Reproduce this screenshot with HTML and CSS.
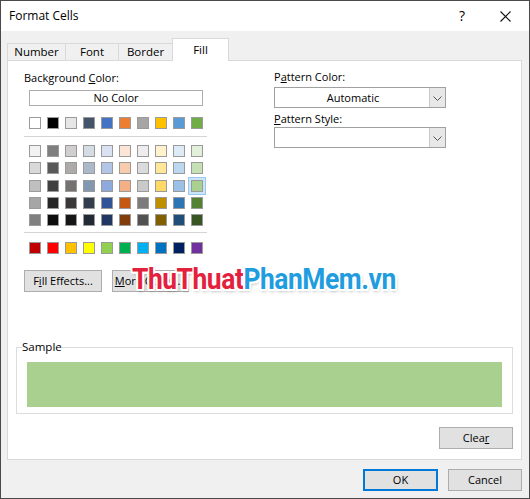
FILE: index.html
```html
<!DOCTYPE html>
<html>
<head>
<meta charset="utf-8">
<title>Format Cells</title>
<link rel="stylesheet" href="styles.css">
</head>
<body>
<div class="window">
  <div class="titlebar">
    <span class="title">Format Cells</span>
    <span class="help">?</span>
    <svg class="close" width="11" height="11" viewBox="0 0 11 11"><path d="M0.5 0.5 L10.5 10.5 M10.5 0.5 L0.5 10.5" stroke="#111" stroke-width="1.1" fill="none"/></svg>
  </div>
  <div class="content">
    <div class="tabs">
      <div class="tab tab-number">Number</div>
      <div class="tab tab-font">Font</div>
      <div class="tab tab-border">Border</div>
      <div class="tab tab-fill active">Fill</div>
    </div>
    <div class="panel">
      <div class="top">
        <div class="left">
          <div class="label">Background <u>C</u>olor:</div>
          <div class="nocolor">No Color</div>
          <div class="row theme">
            <span class="sw" style="background:#FFFFFF"></span>
            <span class="sw" style="background:#000000"></span>
            <span class="sw" style="background:#E7E6E6"></span>
            <span class="sw" style="background:#44546A"></span>
            <span class="sw" style="background:#4472C4"></span>
            <span class="sw" style="background:#ED7D31"></span>
            <span class="sw" style="background:#A5A5A5"></span>
            <span class="sw" style="background:#FFC000"></span>
            <span class="sw" style="background:#5B9BD5"></span>
            <span class="sw" style="background:#70AD47"></span>
          </div>
          <div class="sep"></div>
          <div class="grid">
            <span class="sw" style="background:#F2F2F2"></span>
            <span class="sw" style="background:#7F7F7F"></span>
            <span class="sw" style="background:#D0CECE"></span>
            <span class="sw" style="background:#D6DCE4"></span>
            <span class="sw" style="background:#D9E1F2"></span>
            <span class="sw" style="background:#FCE4D6"></span>
            <span class="sw" style="background:#EDEDED"></span>
            <span class="sw" style="background:#FFF2CC"></span>
            <span class="sw" style="background:#DDEBF7"></span>
            <span class="sw" style="background:#E2EFDA"></span>

            <span class="sw" style="background:#D9D9D9"></span>
            <span class="sw" style="background:#595959"></span>
            <span class="sw" style="background:#AEAAAA"></span>
            <span class="sw" style="background:#ACB9CA"></span>
            <span class="sw" style="background:#B4C6E7"></span>
            <span class="sw" style="background:#F8CBAD"></span>
            <span class="sw" style="background:#DBDBDB"></span>
            <span class="sw" style="background:#FFE699"></span>
            <span class="sw" style="background:#BDD7EE"></span>
            <span class="sw" style="background:#C6E0B4"></span>

            <span class="sw" style="background:#BFBFBF"></span>
            <span class="sw" style="background:#404040"></span>
            <span class="sw" style="background:#757171"></span>
            <span class="sw" style="background:#8497B0"></span>
            <span class="sw" style="background:#8EA9DB"></span>
            <span class="sw" style="background:#F4B084"></span>
            <span class="sw" style="background:#C9C9C9"></span>
            <span class="sw" style="background:#FFD966"></span>
            <span class="sw" style="background:#9BC2E6"></span>
            <span class="sw selected" style="background:#A9D08E"></span>

            <span class="sw" style="background:#A6A6A6"></span>
            <span class="sw" style="background:#262626"></span>
            <span class="sw" style="background:#3A3838"></span>
            <span class="sw" style="background:#333F4F"></span>
            <span class="sw" style="background:#305496"></span>
            <span class="sw" style="background:#C65911"></span>
            <span class="sw" style="background:#7B7B7B"></span>
            <span class="sw" style="background:#BF8F00"></span>
            <span class="sw" style="background:#2F75B5"></span>
            <span class="sw" style="background:#548235"></span>

            <span class="sw" style="background:#808080"></span>
            <span class="sw" style="background:#0D0D0D"></span>
            <span class="sw" style="background:#161616"></span>
            <span class="sw" style="background:#222B35"></span>
            <span class="sw" style="background:#203764"></span>
            <span class="sw" style="background:#833C0C"></span>
            <span class="sw" style="background:#525252"></span>
            <span class="sw" style="background:#806000"></span>
            <span class="sw" style="background:#1F4E78"></span>
            <span class="sw" style="background:#375623"></span>
          </div>
          <div class="sep sep2"></div>
          <div class="row standard">
            <span class="sw" style="background:#C00000"></span>
            <span class="sw" style="background:#FF0000"></span>
            <span class="sw" style="background:#FFC000"></span>
            <span class="sw" style="background:#FFFF00"></span>
            <span class="sw" style="background:#92D050"></span>
            <span class="sw" style="background:#00B050"></span>
            <span class="sw" style="background:#00B0F0"></span>
            <span class="sw" style="background:#0070C0"></span>
            <span class="sw" style="background:#002060"></span>
            <span class="sw" style="background:#7030A0"></span>
          </div>
          <div class="btnrow">
            <div class="btn btn-effects">F<u>i</u>ll Effects...</div>
            <div class="btn btn-more"><u>M</u>ore Colors...</div>
          </div>
        </div>
        <div class="right">
          <div class="label">P<u>a</u>ttern Color:</div>
          <div class="select">
            <span class="select-value">Automatic</span>
            <span class="drop"><svg width="9" height="5" viewBox="0 0 9 5"><path d="M0.5 0.5 L4.5 4.5 L8.5 0.5" stroke="#555" fill="none"/></svg></span>
          </div>
          <div class="label label2"><u>P</u>attern Style:</div>
          <div class="select">
            <span class="select-value"></span>
            <span class="drop"><svg width="9" height="5" viewBox="0 0 9 5"><path d="M0.5 0.5 L4.5 4.5 L8.5 0.5" stroke="#555" fill="none"/></svg></span>
          </div>
        </div>
      </div>
      <fieldset class="sample">
        <legend>Sample</legend>
        <div class="sample-fill"></div>
      </fieldset>
      <div class="clearrow">
        <div class="btn btn-clear">Clea<u>r</u></div>
      </div>
      <div class="watermark"><span class="wm-red">ThuThuat</span><span class="wm-blue">PhanMem.vn</span></div>
    </div>
    <div class="footer">
      <div class="btn btn-ok">OK</div>
      <div class="btn btn-cancel">Cancel</div>
    </div>
  </div>
</div>
</body>
</html>
```

FILE: styles.css
```css
* { box-sizing: border-box; }
html, body { margin: 0; padding: 0; }
body {
  width: 530px;
  height: 499px;
  font-family: "Open Sans", "Noto Sans", sans-serif;
  font-size: 11px;
  color: #000;
  background: #f0f0f0;
  overflow: hidden;
}
u { text-decoration: underline; text-underline-offset: 1px; }

.window {
  width: 530px;
  height: 499px;
  border: 1px solid #4a4a4a;
  display: flex;
  flex-direction: column;
  background: #f0f0f0;
}

.titlebar {
  height: 30px;
  background: #fff;
  display: flex;
  align-items: center;
  padding-left: 8px;
  flex: none;
}
.title { font-size: 12px; flex: 1; padding-bottom: 1px; }
.help { font-size: 14px; margin-right: 35px; padding-bottom: 2px; }
.close { margin-right: 18px; }

.content {
  flex: 1;
  padding: 7px 7px 0 6px;
  display: flex;
  flex-direction: column;
}

.tabs {
  display: flex;
  align-items: flex-end;
  height: 22px;
  position: relative;
  z-index: 1;
}
.tab {
  height: 17px;
  border: 1px solid #d9d9d9;
  border-bottom: none;
  border-right: none;
  background: #f0f0f0;
  text-align: center;
  line-height: 16px;
  font-size: 11.5px;
}
.tab-number { width: 58px; }
.tab-font { width: 53px; }
.tab-border { width: 54px; }
.tab-fill {
  width: 57px;
  background: #fff;
  border-right: 1px solid #d9d9d9;
  line-height: 16px;
  padding-top: 3px;
  margin-bottom: -1px;
  height: 23px;
}

.panel {
  position: relative;
  height: 400px;
  background: #fff;
  border: 1px solid #d9d9d9;
  display: flex;
  flex-direction: column;
  padding: 0 0 0 8px;
  flex: none;
}

.top {
  display: flex;
  padding: 8px 0 0 8px;
}
.left { width: 250px; padding-top: 1px; }
.right { width: 172px; }

.label { height: 16px; line-height: 16px; }

.nocolor {
  margin: 4px 0 0 5px;
  width: 174px;
  height: 16px;
  border: 1px solid #adadad;
  text-align: center;
  line-height: 14px;
}

.row { display: flex; gap: 6px; margin-left: 5px; }
.theme { margin-top: 11px; }
.sw {
  display: block;
  width: 12px;
  height: 12px;
  border: 1px solid #9a9a9a;
  position: relative;
}
.sw.selected {
  outline: 1px solid #99c9ef;
  outline-offset: 2px;
  box-shadow: 0 0 0 3px #cce4f7;
}

.sep { margin-top: 7px; width: 183px; height: 1px; background: #d4d4d4; }
.sep2 { margin-top: 6px; }

.grid {
  margin: 8px 0 0 5px;
  display: grid;
  grid-template-columns: repeat(10, 12px);
  column-gap: 6px;
  row-gap: 5.33px;
}
.standard { margin-top: 9px; }

.btn {
  background: #e1e1e1;
  border: 1px solid #adadad;
  text-align: center;
  height: 22px;
  line-height: 20px;
}
.btnrow { display: flex; gap: 10px; margin-top: 16px; }
.btn-effects { width: 78px; }
.btn-more { width: 77px; }

.select {
  margin-top: 2px;
  width: 172px;
  height: 21px;
  border: 1px solid #a0a0a0;
  display: flex;
}
.select-value { flex: 1; text-align: center; line-height: 19px; padding-left: 2px; }
.drop {
  width: 16px;
  background: #e8e8e8;
  border-left: 1px solid #c8c8c8;
  display: flex;
  align-items: center;
  justify-content: center;
  padding-top: 1px;
}
.label2 { margin-top: 3px; }
.label2 + .select { margin-top: 0; }

.sample {
  margin: 47px 0 0 0;
  width: 497px;
  border: 1px solid #dcdcdc;
  padding: 7px 10px 6px 10px;
  min-width: 0;
}
.sample legend {
  padding: 0;
  margin-left: -5px;
  line-height: 16px;
  font-size: 11.5px;
}
.sample-fill { height: 45px; background: #a9d08e; }

.clearrow { display: flex; justify-content: flex-end; width: 497px; margin-top: 13px; }
.btn-clear { width: 74px; height: 22px; }

.footer {
  display: flex;
  justify-content: flex-end;
  gap: 10px;
  padding-top: 9px;
  padding-right: 0;
}
.btn-ok { width: 75px; border: 2px solid #0078d7; line-height: 18px; }
.btn-cancel { width: 74px; }

.watermark {
  position: absolute;
  left: 124px;
  top: 201px;
  font-family: "Roboto", "Liberation Sans", sans-serif;
  font-weight: 700;
  font-size: 30px;
  letter-spacing: -0.5px;
  line-height: 34px;
  white-space: nowrap;
  transform: scaleX(0.88);
  transform-origin: left top;
  text-shadow:
    -2px -2px 0 #fff, 2px -2px 0 #fff, -2px 2px 0 #fff, 2px 2px 0 #fff,
    0 -2px 0 #fff, 0 2px 0 #fff, -2px 0 0 #fff, 2px 0 0 #fff,
    1px 2px 4px rgba(0,0,0,0.45);
}
.wm-red { color: #e4213c; }
.wm-blue { color: #1f9ddf; }
```
